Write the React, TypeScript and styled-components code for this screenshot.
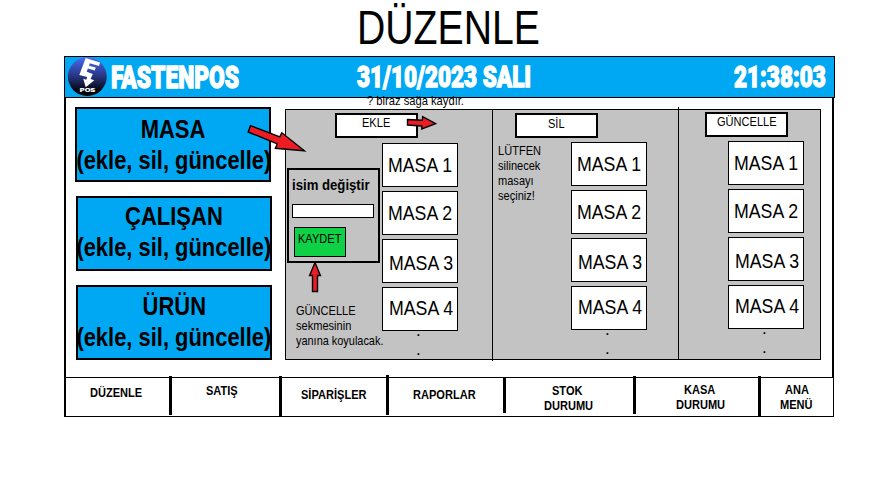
import React from "react";
import styled, { createGlobalStyle } from "styled-components";

const BLUE = "#00a8f3";
const GRAY = "#c3c3c3";
const GREEN = "#0ed145";
const RED = "#ec1c24";

const GlobalStyle = createGlobalStyle`
  * { box-sizing: border-box; }
  html, body { margin: 0; padding: 0; background: #fff; }
  body { font-family: "Liberation Sans", Arial, sans-serif; color: #000; overflow: hidden; }
`;

const Page = styled.main`
  position: relative;
  width: 895px;
  height: 484px;
  overflow: hidden;
  background: #fff;
`;

const Condensed = styled.span<{ $x?: number; $w?: number; $origin?: string }>`
  display: block;
  white-space: nowrap;
  margin-left: ${(p) => p.$x ?? 0}px;
  transform: scaleX(${(p) => p.$w ?? 0.85});
  transform-origin: ${(p) => p.$origin ?? "left"} center;
`;

const Title = styled.h1`
  margin: 0;
  height: 56px;
  padding-left: 357px;
  font-size: 49px;
  line-height: 54px;
  font-weight: 400;
`;

const Screen = styled.section`
  width: 771px;
  margin-left: 64px;
`;

const Header = styled.header`
  display: grid;
  grid-template-columns: 46px 246px 377px 1fr;
  height: 42px;
  border: 1px solid #000;
  background: ${BLUE};
`;

const Logo = styled.svg`
  display: block;
  margin-left: 2px;
  width: 40px;
  height: 40px;
`;

const HeaderText = styled.div<{ $top: number; $size: number }>`
  padding-top: ${(p) => p.$top}px;
  font-family: Roboto, "Liberation Sans", sans-serif;
  font-size: ${(p) => p.$size}px;
  line-height: 36px;
  font-weight: 900;
  color: #fff;
  -webkit-text-stroke: 1.3px #fff;
`;

const Body = styled.div`
  display: grid;
  grid-template-columns: 219px 536px;
  align-items: start;
  width: 770px;
  height: 279px;
  border: solid #000;
  border-width: 0 2px;
`;

const SideMenu = styled.div`
  display: flex;
  flex-direction: column;
  gap: 14px;
  padding: 9px 0 0 10px;
`;

const SideButton = styled.button<{ $top: number; $shift: number }>`
  display: flex;
  flex-direction: column;
  align-items: center;
  width: 196px;
  height: 75px;
  margin: 0 0 0 ${(p) => p.$shift}px;
  padding: ${(p) => p.$top}px 0 0 ${(p) => -p.$shift}px;
  border: 2px solid #000;
  background: ${BLUE};
  color: #000;
  font: 700 26.5px/31px "Liberation Sans", Arial, sans-serif;
`;

const Panel = styled.div`
  display: grid;
  grid-template-columns: 206px 186px 142px;
  height: 251px;
  margin-top: 11px;
  border: 1px solid #000;
  background: ${GRAY};
`;

const Column = styled.div<{ $divider?: boolean; $up?: number; $down?: number }>`
  margin: -${(p) => p.$up ?? 0}px 0 -${(p) => p.$down ?? 0}px;
  padding-top: ${(p) => p.$up ?? 0}px;
  border-left: ${(p) => (p.$divider ? "1px solid #000" : "none")};
`;

const Tab = styled.button<{ $x: number; $y: number; $top: number }>`
  display: flex;
  align-items: flex-start;
  width: 83px;
  height: 25px;
  margin: ${(p) => p.$y}px 0 0 ${(p) => p.$x}px;
  padding: ${(p) => p.$top}px 0 0;
  border: 2px solid #000;
  background: #fff;
  color: #000;
  font: 400 13px/15px "Liberation Sans", Arial, sans-serif;
`;

const Split = styled.div<{ $side: number; $top: number }>`
  display: grid;
  grid-template-columns: ${(p) => p.$side}px 76px;
  align-items: start;
  padding-top: ${(p) => p.$top}px;
`;

const TableList = styled.div`
  display: flex;
  flex-direction: column;
  gap: 4px;
`;

const TableButton = styled.button<{ $top: number }>`
  display: flex;
  align-items: flex-start;
  width: 76px;
  height: 44px;
  padding: ${(p) => p.$top}px 0 0;
  border: 1px solid #000;
  background: #fff;
  color: #000;
  font: 400 21px/24px "Liberation Sans", Arial, sans-serif;
`;

const Dots = styled.div`
  height: 38px;
  margin-top: -14px;
  padding-left: 34px;
  font-size: 17px;
  line-height: 19px;
`;

const Note = styled.p<{ $x: number; $y: number }>`
  margin: ${(p) => p.$y}px 0 0 ${(p) => p.$x}px;
  font-size: 13px;
  line-height: 15px;
`;

const EditCard = styled.div`
  width: 93px;
  height: 95px;
  margin: 25px 0 0 1px;
  padding: 7px 0 0 3px;
  border: 2px solid #000;
  font-size: 14px;
  line-height: 16px;
  font-weight: 700;
`;

const NameField = styled.input`
  display: block;
  width: 82px;
  height: 14px;
  margin: 11px 0 0;
  padding: 0;
  border: 1px solid #000;
  border-radius: 0;
  background: #fff;
`;

const SaveButton = styled.button`
  display: flex;
  align-items: flex-start;
  width: 52px;
  height: 30px;
  margin: 9px 0 0 2px;
  padding: 3px 0 0;
  border: 1px solid #000;
  background: ${GREEN};
  color: #000;
  font: 400 13px/15px "Liberation Sans", Arial, sans-serif;
`;

const Nav = styled.nav`
  display: grid;
  grid-template-columns: 103px 110px 107px 117px 130px 125px 75px;
  width: 770px;
  height: 40px;
  border: solid #000;
  border-width: 1px 1px 1px 2px;
`;

const NavItem = styled.div<{ $top: number; $above?: number; $below?: number }>`
  display: flex;
  flex-direction: column;
  align-items: flex-start;
  margin-top: -${(p) => p.$above ?? 0}px;
  margin-bottom: ${(p) => p.$below ?? 0}px;
  padding-top: ${(p) => p.$top + (p.$above ?? 0)}px;
  border-left: ${(p) => (p.$above ? "3px solid #000" : "none")};
  font-size: 13px;
  line-height: 15px;
  font-weight: 700;
`;

const Remark = styled.div`
  position: absolute;
  left: 366.5px;
  top: 93px;
  font-size: 13px;
  line-height: 15px;
`;

const Arrows = styled.svg`
  position: absolute;
  inset: 0;
  pointer-events: none;
`;

const sections = [
  { name: "MASA", top: 5, shift: -1 },
  { name: "ÇALIŞAN", top: 3, shift: 0 },
  { name: "ÜRÜN", top: 4, shift: 0 },
];

const rows = [
  { n: 1, top: 9, x: 5 },
  { n: 2, top: 9, x: 5 },
  { n: 3, top: 11, x: 6 },
  { n: 4, top: 8, x: 6 },
];

const navItems = [
  { lines: [{ t: "DÜZENLE", x: 24 }], top: 7 },
  { lines: [{ t: "SATIŞ", x: 34 }], top: 5, above: 2, below: 1 },
  { lines: [{ t: "SİPARİŞLER", x: 19 }], top: 9, above: 2, below: 0 },
  { lines: [{ t: "RAPORLAR", x: 24 }], top: 9, above: 3, below: 1 },
  { lines: [{ t: "STOK", x: 46 }, { t: "DURUMU", x: 37.5 }], top: 5, above: 1, below: 3 },
  { lines: [{ t: "KASA", x: 48 }, { t: "DURUMU", x: 39.5 }], top: 4, above: 2, below: 2 },
  { lines: [{ t: "ANA", x: 23.5 }, { t: "MENÜ", x: 19 }], top: 4, above: 2, below: 0 },
];

function Tables() {
  return (
    <TableList>
      {rows.map((r) => (
        <TableButton key={r.n} $top={r.top}>
          <Condensed $x={r.x} $w={0.845}>MASA {r.n}</Condensed>
        </TableButton>
      ))}
      <Dots>
        <div>.</div>
        <div>.</div>
      </Dots>
    </TableList>
  );
}

export default function App() {
  return (
    <Page>
      <GlobalStyle />
      <Title><Condensed $w={0.8}>DÜZENLE</Condensed></Title>
      <Screen>
        <Header>
          <Logo viewBox="0 0 40 40">
            <defs>
              <linearGradient id="orb" x1="0" y1="0" x2="0" y2="1">
                <stop offset="0" stopColor="#4a68f2" />
                <stop offset="0.5" stopColor="#26347f" />
                <stop offset="0.85" stopColor="#05060f" />
                <stop offset="1" stopColor="#000" />
              </linearGradient>
            </defs>
            <circle cx="20.3" cy="19.7" r="19.4" fill="url(#orb)" />
            <path d="M18.7 1 L33 5.5 L32 8.9 L22.8 6.3 L22 8.7 L28.7 10.5 L27.8 13.4 L20.8 11.5 L19.8 14.7 L25.8 17 L23.6 22 L27.3 23.3 L18.7 30.3 L16.3 21.8 L19.3 22.7 L20.2 20 L12.3 18 Z" fill="#fff" />
            <text x="12.8" y="35" fontSize="4.4" fontWeight="900" fontFamily="Inter, sans-serif" fill="#fff" textLength="15.5" lengthAdjust="spacingAndGlyphs">POS</text>
          </Logo>
          <HeaderText $top={3} $size={31}><Condensed $w={0.735}>FASTENPOS</Condensed></HeaderText>
          <HeaderText $top={2} $size={30}><Condensed $w={0.75}>31/10/2023 SALI</Condensed></HeaderText>
          <HeaderText $top={1.5} $size={29.5}><Condensed $w={0.763}>21:38:03</Condensed></HeaderText>
        </Header>
        <Body>
          <SideMenu>
            {sections.map((s) => (
              <SideButton key={s.name} $top={s.top} $shift={s.shift}>
                <Condensed $w={0.83} $origin="center">{s.name}</Condensed>
                <Condensed $w={0.827} $origin="center">(ekle, sil, güncelle)</Condensed>
              </SideButton>
            ))}
          </SideMenu>
          <Panel>
            <Column>
              <Tab $x={49} $y={3} $top={0}><Condensed $x={24.5}>EKLE</Condensed></Tab>
              <Split $side={96} $top={5}>
                <div>
                  <EditCard>
                    <Condensed $w={0.94}>isim değiştir</Condensed>
                    <NameField aria-label="isim" />
                    <SaveButton><Condensed $x={3}>KAYDET</Condensed></SaveButton>
                  </EditCard>
                  <Note $x={9.5} $y={40}>
                    <Condensed>GÜNCELLE</Condensed>
                    <Condensed>sekmesinin</Condensed>
                    <Condensed $w={0.84}>yanına koyulacak.</Condensed>
                  </Note>
                </div>
                <Tables />
              </Split>
            </Column>
            <Column $divider $down={2}>
              <Tab $x={22} $y={3} $top={1}><Condensed $x={30.5}>SİL</Condensed></Tab>
              <Split $side={78} $top={4}>
                <Note $x={4.5} $y={1}>
                  <Condensed>LÜTFEN</Condensed>
                  <Condensed>silinecek</Condensed>
                  <Condensed>masayı</Condensed>
                  <Condensed>seçiniz!</Condensed>
                </Note>
                <Tables />
              </Split>
            </Column>
            <Column $divider $up={3}>
              <Tab $x={26} $y={2} $top={0}><Condensed $x={9.5}>GÜNCELLE</Condensed></Tab>
              <Split $side={49} $top={4}>
                <span />
                <Tables />
              </Split>
            </Column>
          </Panel>
        </Body>
        <Nav>
          {navItems.map((item, i) => (
            <NavItem key={i} $top={item.top} $above={item.above} $below={item.below}>
              {item.lines.map((l) => (
                <Condensed key={l.t} $x={l.x}>{l.t}</Condensed>
              ))}
            </NavItem>
          ))}
        </Nav>
      </Screen>
      <Remark><Condensed $w={0.86}>? biraz sağa kaydır.</Condensed></Remark>
      <Arrows width="895" height="484" fill={RED} stroke="#000" strokeWidth="1.4">
        <path d="M250.5 125.7 L279.8 136.8 L281.8 132.8 L304.4 150.8 L275.4 148.3 L277.3 143.8 L248.2 132 Z" />
        <path d="M407.5 119.5 L422.4 120.3 L422.6 116.7 L435.6 123.6 L421.8 129 L421.8 126 L407.5 125 Z" />
        <path d="M315 262.5 L320.4 275.5 L317.5 275.5 L317.5 291.5 L312.5 291.5 L312.5 275.5 L309.6 275.5 Z" />
      </Arrows>
    </Page>
  );
}
